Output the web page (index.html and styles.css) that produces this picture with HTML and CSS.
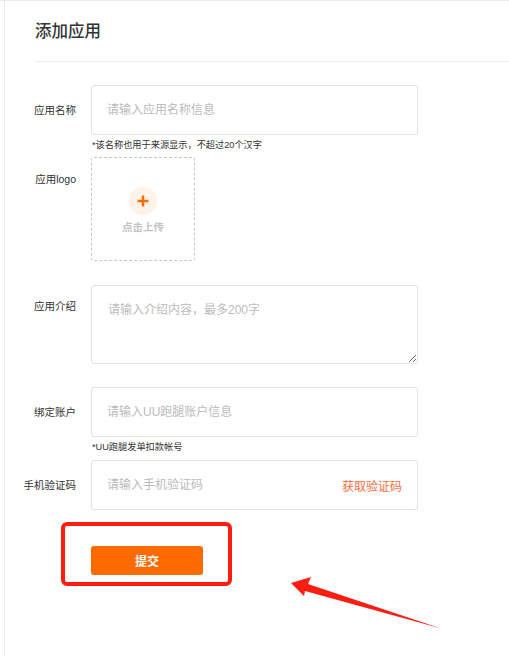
FILE: index.html
```html
<!DOCTYPE html>
<html lang="zh-CN">
<head>
<meta charset="utf-8">
<title>添加应用</title>
<link rel="stylesheet" href="styles.css">
</head>
<body>
<div class="page">
  <div class="header">
    <h1 class="title">添加应用</h1>
  </div>
  <form class="form">
    <div class="row row-hint">
      <label class="label">应用名称</label>
      <div class="field">
        <input class="input" type="text" placeholder="请输入应用名称信息">
        <p class="hint">*该名称也用于来源显示，不超过20个汉字</p>
      </div>
    </div>
    <div class="row row-logo">
      <label class="label label-top">应用logo</label>
      <div class="upload">
        <span class="plus-circle">
          <svg class="plus" viewBox="0 0 12 12" width="12" height="12"><path d="M6 0.5V11.5M0.5 6H11.5" stroke="#ff6a00" stroke-width="2.4" fill="none"/></svg>
        </span>
        <span class="upload-text">点击上传</span>
      </div>
    </div>
    <div class="row row-intro">
      <label class="label label-top2">应用介绍</label>
      <textarea class="textarea" placeholder="请输入介绍内容，最多200字"></textarea>
    </div>
    <div class="row row-hint2">
      <label class="label">绑定账户</label>
      <div class="field">
        <input class="input" type="text" placeholder="请输入UU跑腿账户信息">
        <p class="hint">*UU跑腿发单扣款帐号</p>
      </div>
    </div>
    <div class="row row-phone">
      <label class="label">手机验证码</label>
      <div class="code-box">
        <input class="code-input" type="text" placeholder="请输入手机验证码">
        <span class="code-link">获取验证码</span>
      </div>
    </div>
    <div class="actions">
      <button class="submit" type="button">提交</button>
    </div>
  </form>
</div>
<svg class="annotation" viewBox="0 0 509 656" width="509" height="656">
  <rect x="63" y="524" width="167" height="60" rx="4" ry="4" fill="none" stroke="#ff1d12" stroke-width="4"/>
  <polygon points="291,583 311,577 308,584 441,628.5 305,591 304,596" fill="#ff1d12"/>
</svg>
</body>
</html>
```
FILE: styles.css
```css
html, body {
  margin: 0;
  padding: 0;
  background: #fff;
}

body {
  font-family: "Liberation Sans", "Noto Sans CJK SC", sans-serif;
  color: #333;
  border-top: 1px solid #ededed;
  position: relative;
  min-height: 655px;
}

.page {
  margin-left: 4px;
  border-left: 1px solid #ececec;
  min-height: 655px;
}

.header {
  margin-left: 30px;
  border-bottom: 1px solid #ececec;
  height: 61px;
  box-sizing: border-box;
  padding-top: 17px;
}

.title {
  margin: 0;
  font-size: 16.5px;
  line-height: 26px;
  font-weight: 500;
  color: #333;
}

.form {
  padding-top: 23px;
}

.row {
  display: flex;
  align-items: flex-start;
  gap: 15px;
}

.row-hint { margin-bottom: 5px; }
.row-logo { margin-bottom: 24px; }
.row-intro { margin-bottom: 23px; }
.row-hint2 { margin-bottom: 6px; }
.row-phone { margin-bottom: 36px; }

.label {
  width: 71px;
  flex: none;
  text-align: right;
  font-size: 10.5px;
  line-height: 50px;
  color: #333;
  white-space: nowrap;
}

.label-top { line-height: 44px; }
.label-top2 { line-height: 42px; }

.field {
  display: flex;
  flex-direction: column;
}

.input,
.code-box,
.textarea {
  width: 327px;
  box-sizing: border-box;
  border: 1px solid #e1e1e1;
  border-radius: 3px;
  background: #fff;
}

.input {
  height: 50px;
  padding: 0 15px;
  font-family: inherit;
  font-size: 12px;
  color: #333;
  outline: none;
}

.input::placeholder,
.code-input::placeholder,
.textarea::placeholder {
  color: #bbbbbb;
}

.hint {
  margin: 3px 0 0 1px;
  font-size: 9.2px;
  line-height: 14px;
  color: #333;
}

.upload {
  width: 104px;
  height: 104px;
  box-sizing: border-box;
  border: 1px dashed #c6c6c6;
  border-radius: 3px;
  display: flex;
  flex-direction: column;
  align-items: center;
  padding-top: 29px;
}

.plus-circle {
  width: 28px;
  height: 28px;
  border-radius: 50%;
  background: #fff2e8;
  display: flex;
  align-items: center;
  justify-content: center;
}

.plus { display: block; }

.upload-text {
  margin-top: 5px;
  font-size: 10.5px;
  line-height: 14px;
  font-weight: bold;
  color: #c4c4c4;
}

.textarea {
  height: 79px;
  padding: 16px 16px;
  font-family: inherit;
  font-size: 12px;
  line-height: 16px;
  color: #333;
  outline: none;
  resize: both;
  display: block;
}

.code-box {
  height: 50px;
  display: flex;
  align-items: center;
  padding: 0 15px;
}

.code-input {
  flex: 1;
  min-width: 0;
  border: none;
  outline: none;
  padding: 0;
  font-family: inherit;
  font-size: 12px;
  color: #333;
  background: transparent;
}

.code-link {
  font-size: 12px;
  color: #ff6b3b;
  white-space: nowrap;
}

.actions {
  padding-left: 86px;
}

.submit {
  width: 112px;
  height: 29px;
  border: none;
  border-radius: 3px;
  background: #ff6a00;
  color: #fff;
  font-family: inherit;
  font-size: 12px;
  font-weight: bold;
  padding: 0;
}

.annotation {
  position: absolute;
  left: 0;
  top: -1px;
  pointer-events: none;
}
```
